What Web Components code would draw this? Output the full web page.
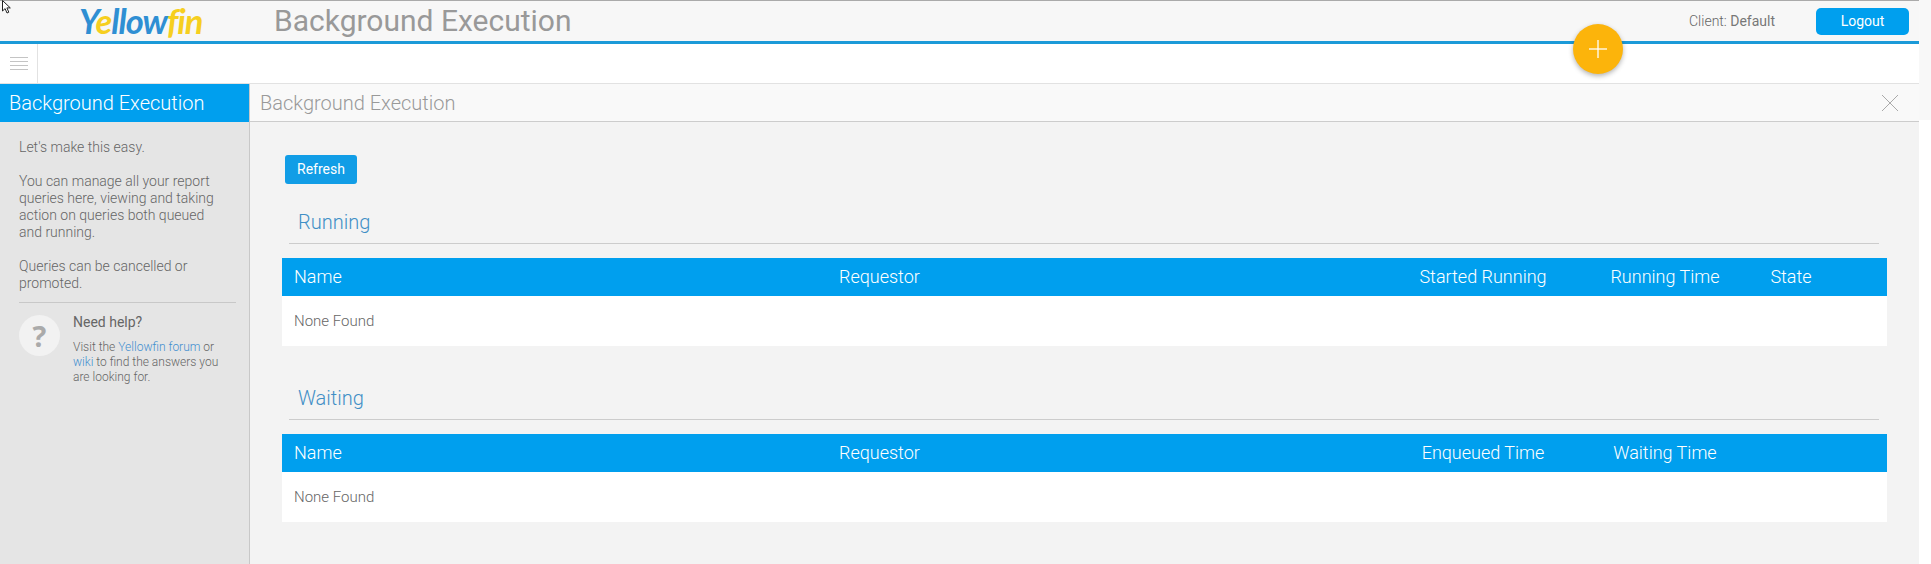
<!DOCTYPE html>
<html>
<head>
<meta charset="utf-8">
<title>Background Execution</title>
<style>
	html, body { margin: 0; height: 100%; overflow: hidden; background: #fff; }
	body { font-family: Roboto, "Liberation Sans", sans-serif; }
	yf-app { height: 564px; }
</style>
</head>
<body>
<yf-app>
	<yf-header slot="header" title="Background Execution" client="Default"></yf-header>
	<yf-toolbar slot="toolbar"></yf-toolbar>
	<yf-sidebar slot="sidebar" title="Background Execution">
		<p>Let's make this easy.</p>
		<p>You can manage all your report queries here, viewing and taking action on queries both queued and running.</p>
		<p>Queries can be cancelled or promoted.</p>
	</yf-sidebar>
	<yf-panel slot="main" title="Background Execution">
		<yf-button>Refresh</yf-button>
		<yf-section title="Running" columns="Name,Requestor,Started Running,Running Time,State"></yf-section>
		<yf-section title="Waiting" columns="Name,Requestor,Enqueued Time,Waiting Time"></yf-section>
	</yf-panel>
</yf-app>

<script>
(() => {
	const define = (name, render) => {
		customElements.define(name, class extends HTMLElement {
			constructor() {
				super();
				this.attachShadow({ mode: 'open' });
			}

			connectedCallback() {
				this.shadowRoot.innerHTML = render(this);
			}
		});
	};

	define('yf-app', () => `
		<style>
			:host { display: block; position: relative; width: 1931px; background: #fff; overflow: hidden; }
			.page { width: 1919px; display: flex; flex-direction: column; height: 100%; }
			.body { display: flex; flex: 1; min-height: 0; }
			.cursor { position: absolute; left: 0; top: 0; }
			.strip { position: absolute; left: 1919px; top: 0; width: 12px; height: 120px; background: #f8f8f8; }
		</style>
		<div class="page">
			<slot name="header"></slot>
			<slot name="toolbar"></slot>
			<div class="body">
				<slot name="sidebar"></slot>
				<slot name="main"></slot>
			</div>
		</div>
		<div class="strip"></div>
		<svg class="cursor" width="14" height="16" viewBox="0 0 14 16">
			<path d="M2.5 .5v10.5l2.6-2.4 1.9 4.4 1.8-.8-1.9-4.3h3.4z" fill="#fff" stroke="#222" stroke-width="1"></path>
		</svg>
	`);

	define('yf-header', (el) => `
		<style>
			:host { display: flex; align-items: center; position: relative; box-sizing: border-box; height: 44px; background: #f7f7f7; border-top: 1px solid #aaa; border-bottom: 3px solid #1b9ad8; }
			.logo { width: 274px; box-sizing: border-box; padding-left: 79px; padding-bottom: 1px; font: italic 700 34.5px/39px Lato, sans-serif; letter-spacing: -1px; color: #2f8fd3; }
			.logo span { color: #f6cf1f; }
			h1 { margin: 0; flex: 1; font: 400 30px/40px Roboto, sans-serif; color: #999; }
			.client { font-size: 14px; font-weight: 300; color: #666; margin-right: 41px; }
			.client b { font-weight: 400; color: #777; }
			.logout { width: 93px; height: 27px; box-sizing: border-box; margin-right: 10px; background: #009fee; color: #fff; border-radius: 5px; font-size: 14px; line-height: 27px; text-align: center; }
			.fab { position: absolute; left: 1573px; top: 23px; width: 50px; height: 50px; border-radius: 50%; background: #fcb40b; box-shadow: 0 2px 5px rgba(0,0,0,.3); z-index: 2; display: flex; align-items: center; justify-content: center; }
		</style>
		<div class="logo">Y<span>e</span>llow<span>fin</span></div>
		<h1>${el.getAttribute('title')}</h1>
		<div class="client">Client: <b>${el.getAttribute('client')}</b></div>
		<div class="logout">Logout</div>
		<div class="fab">
			<svg width="20" height="20" viewBox="0 0 20 20" stroke="#fff" stroke-width="1.3"><line x1="10" y1="1" x2="10" y2="19"></line><line x1="1" y1="10" x2="19" y2="10"></line></svg>
		</div>
	`);

	define('yf-toolbar', () => `
		<style>
			:host { display: block; box-sizing: border-box; height: 40px; background: #fff; border-bottom: 1px solid #e2e2e2; }
			.menu { width: 38px; height: 100%; box-sizing: border-box; border-right: 1px solid #e2e2e2; display: flex; align-items: center; justify-content: center; }
		</style>
		<div class="menu">
			<svg width="18" height="16" viewBox="0 0 18 16" stroke="#c4c4c4" stroke-width="1">
				<line x1="0" y1="1.5" x2="18" y2="1.5"></line>
				<line x1="0" y1="5.5" x2="18" y2="5.5"></line>
				<line x1="0" y1="9.5" x2="18" y2="9.5"></line>
				<line x1="0" y1="13.5" x2="18" y2="13.5"></line>
			</svg>
		</div>
	`);

	define('yf-sidebar', (el) => `
		<style>
			:host { display: block; width: 250px; flex: none; box-sizing: border-box; background: #e5e5e5; border-right: 1px solid #c8c8c8; }
			.title { height: 38px; box-sizing: border-box; padding-left: 9px; background: #009fee; color: #fff; font-weight: 300; font-size: 20px; line-height: 38px; }
			.text { padding: 17px 19px 0 19px; font-size: 14px; font-weight: 300; line-height: 17px; color: #666; }
			::slotted(p) { margin: 0 0 17px; }
			.help { display: flex; margin: -7px 13px 0 19px; padding-top: 12px; border-top: 1px solid #c8c8c8; }
			.mark { flex: none; width: 41px; height: 41px; border-radius: 50%; background: #f2f2f2; color: #aaa; font: 700 29px/41px "Open Sans", sans-serif; text-align: center; margin-right: 13px; }
			.need { font-size: 14px; font-weight: 400; color: #666; line-height: 15px; margin-bottom: 10px; }
			.small { font-size: 12px; font-weight: 300; line-height: 15px; color: #666; white-space: nowrap; }
			a { color: #3f8fd0; text-decoration: none; }
		</style>
		<div class="title">${el.getAttribute('title')}</div>
		<div class="text"><slot></slot></div>
		<div class="help">
			<div class="mark">?</div>
			<div>
				<div class="need">Need help?</div>
				<div class="small">Visit the <a href="#">Yellowfin forum</a> or<br><a href="#">wiki</a> to find the answers you<br>are looking for.</div>
			</div>
		</div>
	`);

	define('yf-panel', (el) => `
		<style>
			:host { display: block; flex: 1; min-width: 0; background: #f3f3f3; }
			.title { position: relative; height: 38px; box-sizing: border-box; padding-left: 10px; background: #f9f9f9; border-bottom: 1px solid #ccc; color: #999; font-weight: 300; font-size: 20px; line-height: 38px; }
			.close { position: absolute; right: 20px; top: 10px; }
			.content { padding: 33px 32px 0 32px; }
		</style>
		<div class="title">${el.getAttribute('title')}
			<svg class="close" width="18" height="18" viewBox="0 0 18 18" stroke="#aaa" stroke-width="1"><line x1="1" y1="1" x2="17" y2="17"></line><line x1="17" y1="1" x2="1" y2="17"></line></svg>
		</div>
		<div class="content"><slot></slot></div>
	`);

	define('yf-button', () => `
		<style>
			:host { display: inline-block; width: 72px; height: 29px; margin-left: 3px; background: #119de6; color: #fff; border-radius: 3px; font-size: 14px; line-height: 29px; text-align: center; vertical-align: top; }
		</style>
		<slot></slot>
	`);

	define('yf-section', (el) => {
		const cells = el.getAttribute('columns').split(',').map((c) => `<div>${c}</div>`).join('');
		return `
			<style>
				:host { display: block; padding-top: 23px; margin-bottom: 14px; }
				h2 { margin: 0 8px 0 7px; padding: 0 9px; height: 36px; border-bottom: 1px solid #ccc; font-size: 20px; font-weight: 300; line-height: 30px; color: #3f8fc6; }
				.table { margin-top: 14px; background: #fff; height: 88px; }
				.head { display: grid; grid-template-columns: 545px 563px 186px 178px 74px 1fr; height: 38px; background: #009fee; color: #fff; font-weight: 300; font-size: 18px; line-height: 38px; }
				.head div { text-align: center; }
				.head div:nth-child(-n+2) { text-align: left; padding-left: 12px; }
				.none { padding: 0 12px; font-size: 15px; font-weight: 300; color: #666; line-height: 50px; }
			</style>
			<h2>${el.getAttribute('title')}</h2>
			<div class="table">
				<div class="head">${cells}</div>
				<div class="none">None Found</div>
			</div>
		`;
	});
})();
</script>
</body>
</html>
